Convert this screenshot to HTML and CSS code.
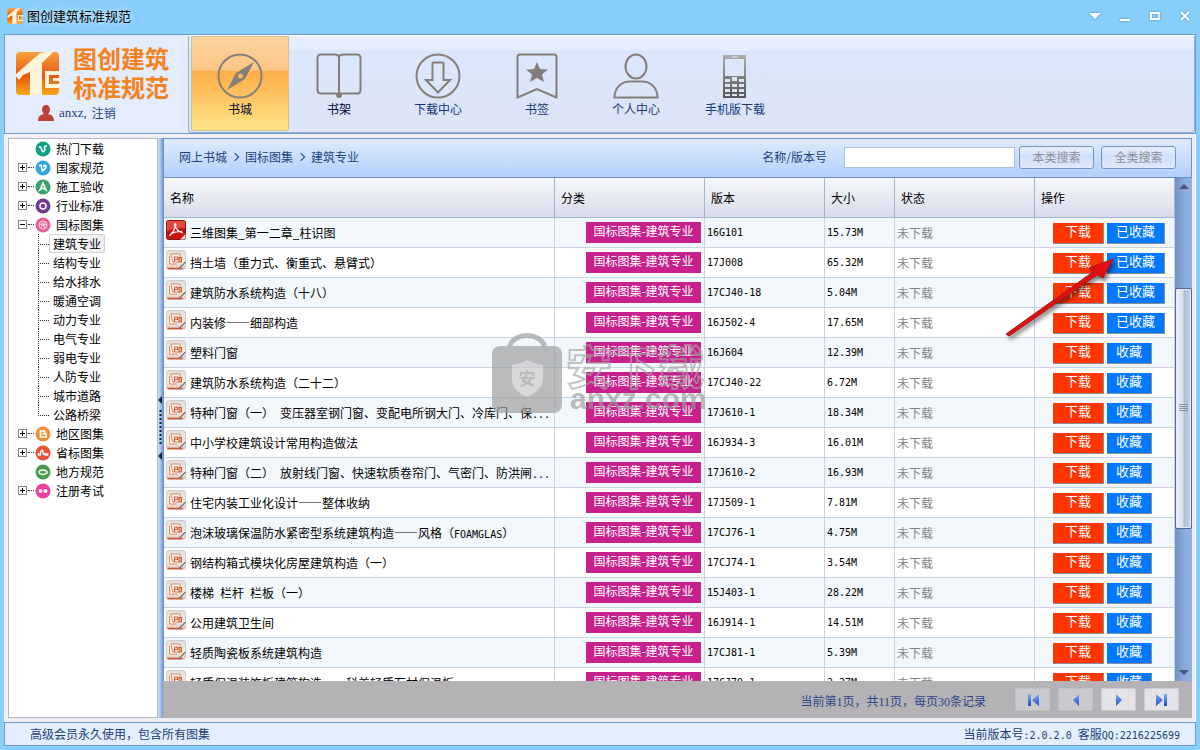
FILE: index.html
```html
<!DOCTYPE html>
<html lang="zh-CN">
<head>
    <meta charset="UTF-8">
    <meta name="viewport" content="width=device-width, initial-scale=1.0">
    <title>图创建筑标准规范</title>
    <link rel="stylesheet" href="styles.css">
</head>
<body>
<svg class="defs" aria-hidden="true">
    <defs>
        <linearGradient id="orange" x1="0" y1="0" x2="0" y2="1">
            <stop offset="0" stop-color="#f9a23c"/><stop offset="0.55" stop-color="#e8560f"/><stop offset="1" stop-color="#f9a81c"/>
        </linearGradient>
        <linearGradient id="paper" x1="0" y1="0" x2="0" y2="1">
            <stop offset="0" stop-color="#dcdcdf"/><stop offset="0.6" stop-color="#f6f1ef"/><stop offset="1" stop-color="#dfc0b4"/>
        </linearGradient>
        <linearGradient id="phone" x1="0" y1="0" x2="0" y2="1">
            <stop offset="0" stop-color="#b0b0b0"/><stop offset="1" stop-color="#555"/>
        </linearGradient>
        <linearGradient id="nav" x1="0" y1="0" x2="0" y2="1">
            <stop offset="0" stop-color="#7db0f8"/><stop offset="1" stop-color="#1f4fc0"/>
        </linearGradient>
        <symbol id="logo" viewBox="0 0 45 45">
            <rect x="1" y="1" width="43" height="43" rx="4" fill="url(#orange)"/>
            <path d="M0 24 25 2 39 0 27 12V44H15V21L8 24 4 29Z" fill="#fff4dc"/>
            <path d="M45 20H30V37H45V33H34V24H45Z" fill="#fff4dc"/>
            <path d="M45 27H38V30H45Z" fill="#fff4dc"/>
        </symbol>
        <symbol id="pdf" viewBox="0 0 20 20">
            <rect x="0.5" y="0.5" width="19" height="19" rx="2" fill="#c8130d" stroke="#8e1612"/>
            <path d="M1 2q0-1 1-1h16q1 0 1 1v6Q10 7 1 11Z" fill="#e4493f"/>
            <path d="M9 3.500c2 0 .5 6-5.500 12.500M9 3.500c-1.500 0 1 8 8 9.500M4.500 14Q10 10.500 16 11.500" fill="none" stroke="#fff" stroke-width="1.200"/>
            <path d="M14 19.500 19.500 14V18L18 19.500Z" fill="#ddd"/>
        </symbol>
        <symbol id="doc" viewBox="0 0 20 20">
            <rect x="0.500" y="0.500" width="19" height="19" rx="2.500" fill="url(#paper)" stroke="#d3ccca"/>
            <path d="M1.500 18.500h15" stroke="#d2572b" stroke-width="1.500"/>
            <path d="M5 4h9v8H6.500ZM3.500 6v8H11" fill="#fdf6f2" stroke="#e08a62"/>
            <path d="M8.500 12V7h3v2.500h-3M13 7.500h2.500v4.500H13Z" fill="none" stroke="#d4602f" stroke-width="1.200"/>
            <path d="M13 18.500 19.500 12" stroke="#777" stroke-width="1.200"/>
        </symbol>
        <symbol id="first" viewBox="0 0 14 14"><path d="M2 1h3v12H2ZM13 1v12L6 7Z" fill="url(#nav)"/></symbol>
        <symbol id="prev" viewBox="0 0 14 14"><path d="M10 1v12L4 7Z" fill="url(#nav)"/></symbol>
        <symbol id="next" viewBox="0 0 14 14"><path d="M4 1v12l6-6Z" fill="url(#nav)"/></symbol>
        <symbol id="last" viewBox="0 0 14 14"><path d="M1 1v12l7-6ZM9 1h3v12H9Z" fill="url(#nav)"/></symbol>
    </defs>
</svg>

<header class="title-bar">
    <svg class="app-icon"><use href="#logo"/></svg>
    <h1 class="app-title">图创建筑标准规范</h1>
    <div class="window-buttons">
        <button type="button" aria-label="菜单"><svg viewBox="0 0 12 12"><path d="M0 3h12L6 9Z" fill="#fff"/></svg></button>
        <button type="button" aria-label="最小化"><svg viewBox="0 0 12 12"><path d="M1 9h10v2H1Z" fill="#fff"/></svg></button>
        <button type="button" aria-label="最大化"><svg viewBox="0 0 12 12"><path d="M2 3h8v6H2Z" fill="none" stroke="#fff" stroke-width="2"/></svg></button>
        <button type="button" aria-label="关闭"><svg viewBox="0 0 12 12"><path d="m2 2 8 8M10 2l-8 8" stroke="#fff" stroke-width="2"/></svg></button>
    </div>
</header>

<div class="ribbon">
    <div class="brand">
        <div class="brand-top">
            <svg class="brand-logo"><use href="#logo"/></svg>
            <div class="brand-name">图创建筑<br>标准规范</div>
        </div>
        <div class="user">
            <svg class="user-icon" viewBox="0 0 16 16"><path d="M8 0c2.500 0 4 1.800 4 4.500 0 2-1 3.500-2 4.500 3.500.8 6 2 6 7H0c0-5 2.500-6.200 6-7-1-1-2-2.500-2-4.500C4 1.800 5.500 0 8 0Z" fill="#c0403c"/></svg>
            <span>anxz,</span><a href="#">注销</a>
        </div>
    </div>
    <nav class="menu">
        <button type="button" class="menu-item active">
            <svg viewBox="0 0 46 46"><circle cx="23" cy="23" r="21.500"/><path class="solid" fill-rule="evenodd" d="M37 9 28 26 10 37 19 20ZM23.500 20.500a2.500 2.500 0 1 0 .01 0Z"/></svg>
            书城
        </button>
        <button type="button" class="menu-item dark">
            <svg viewBox="0 0 46 46"><path d="M23 4Q22 1.500 19 1.500H5Q1.500 1.500 1.500 5V37Q1.500 40.500 5 40.500H19Q22 40.500 23 42Q24 40.500 27 40.500H41Q44.500 40.500 44.500 37V5Q44.500 1.500 41 1.500H27Q24 1.500 23 4V40"/><circle class="solid" cx="23" cy="42" r="3"/></svg>
            书架
        </button>
        <button type="button" class="menu-item">
            <svg viewBox="0 0 46 46"><circle cx="23" cy="23" r="21.500"/><path d="M17.500 10.500q0-1 1-1h9q1 0 1 1V27H35L23 39.500 11 27h6.500Z"/></svg>
            下载中心
        </button>
        <button type="button" class="menu-item">
            <svg viewBox="0 0 46 46"><path d="M3.500 4q0-2.500 2.500-2.500H40q2.500 0 2.500 2.500V44.500L23 36 3.500 44.500Z"/><path class="solid" d="m23 9 3 7 8 .5-6 5 2 7.500-7-4-7 4 2-7.500-6-5 8-.5Z"/></svg>
            书签
        </button>
        <button type="button" class="menu-item">
            <svg viewBox="0 0 46 46"><ellipse cx="23" cy="13.500" rx="10.500" ry="12"/><path d="M1.500 44.500C1.500 33 10 28.500 17 28.500H29C36 28.500 44.500 33 44.500 44.500Z"/></svg>
            个人中心
        </button>
        <button type="button" class="menu-item">
            <svg viewBox="0 0 46 46"><path class="phone" fill-rule="evenodd" d="M11 2h23v43H11ZM13 6v17h19V6ZM13 26v3h5v-3ZM20 24v4h5v-4ZM27 26v3h5v-3ZM13 31v3h5v-3ZM20 31v3h5v-3ZM27 31v3h5v-3ZM13 36v3h5v-3ZM20 36v3h5v-3ZM27 36v3h5v-3ZM13 41v2h5v-2ZM20 41v2h5v-2ZM27 41v2h5v-2ZM20 3.500v1h6v-1Z"/></svg>
            手机版下载
        </button>
    </nav>
</div>

<main class="main">
    <aside class="tree">
        <ul>
            <li class="node"><i class="box none"></i><svg viewBox="0 0 16 16"><circle cx="8" cy="8" r="7.500" fill="#12a086"/><path d="M4 6q2-1 3 4 2 2 3-2-2-3 2-3" /></svg><span>热门下载</span></li>
            <li class="node"><i class="box"></i><svg viewBox="0 0 16 16"><circle cx="8" cy="8" r="7.500" fill="#2fa9dc"/><path d="m4 6 2-1 1.500 6Q11 9 11 6 9 4 8.500 7"/></svg><span>国家规范</span></li>
            <li class="node"><i class="box"></i><svg viewBox="0 0 16 16"><circle cx="8" cy="8" r="7.500" fill="#35a26c"/><path d="M5 11 8 4l3 7-3-2Z"/></svg><span>施工验收</span></li>
            <li class="node"><i class="box"></i><svg viewBox="0 0 16 16"><circle cx="8" cy="8" r="7.500" fill="#733a96"/><circle cx="8" cy="8" r="3"/></svg><span>行业标准</span></li>
            <li class="node"><i class="box open"></i><svg viewBox="0 0 16 16"><circle cx="8" cy="8" r="7.500" fill="#ea5f96"/><g class="thin"><circle cx="8" cy="8" r="4"/><path d="M4 7q4 2 7-2M6 11q1-4 6-3M6 4.500q3 2 4 7"/></g></svg><span>国标图集</span>
                <ul class="children">
                    <li><a class="selected" href="#">建筑专业</a></li>
                    <li><a href="#">结构专业</a></li>
                    <li><a href="#">给水排水</a></li>
                    <li><a href="#">暖通空调</a></li>
                    <li><a href="#">动力专业</a></li>
                    <li><a href="#">电气专业</a></li>
                    <li><a href="#">弱电专业</a></li>
                    <li><a href="#">人防专业</a></li>
                    <li><a href="#">城市道路</a></li>
                    <li><a href="#">公路桥梁</a></li>
                </ul>
            </li>
            <li class="node"><i class="box"></i><svg viewBox="0 0 16 16"><circle cx="8" cy="8" r="7.500" fill="#f0903a"/><path d="M5.500 5h4v2.500h1.500V11H5.500ZM7 8h2"/></svg><span>地区图集</span></li>
            <li class="node"><i class="box"></i><svg viewBox="0 0 16 16"><circle cx="8" cy="8" r="7.500" fill="#ea5333"/><path d="M3.500 8v2h2V7Q8 3 8 8q1 3 2.500 0v2h2V8"/></svg><span>省标图集</span></li>
            <li class="node"><i class="box none"></i><svg viewBox="0 0 16 16"><circle cx="8" cy="8" r="7.500" fill="#4c9c4f"/><path d="M4 9q0-3 4-3t4 3q-4 3-8 0"/></svg><span>地方规范</span></li>
            <li class="node"><i class="box"></i><svg viewBox="0 0 16 16"><circle cx="8" cy="8" r="7.500" fill="#ec3fa0"/><circle class="dot" cx="5.500" cy="8" r="2"/><circle class="dot" cx="10.500" cy="8" r="2"/></svg><span>注册考试</span></li>
        </ul>
    </aside>

    <div class="splitter" aria-hidden="true">
        <svg viewBox="0 0 5 64"><path d="M4 0v8L0 4ZM4 56v8l-4-4Z" fill="#123"/><path d="M2.500 14v36" stroke="#123" stroke-width="2" stroke-dasharray="2 2"/></svg>
    </div>

    <section class="content">
        <form class="toolbar">
            <nav class="crumbs"><a href="#">网上书城</a><i></i><a href="#">国标图集</a><i></i><a href="#">建筑专业</a></nav>
            <label for="keyword">名称/版本号</label>
            <input id="keyword" type="text">
            <button type="button">本类搜索</button>
            <button type="button">全类搜索</button>
        </form>

        <div class="list">
            <div class="table-wrap">
                <table>
                    <colgroup><col><col class="w-type"><col class="w-version"><col class="w-size"><col class="w-state"><col class="w-action"></colgroup>
                    <thead>
                        <tr><th>名称</th><th>分类</th><th>版本</th><th>大小</th><th>状态</th><th>操作</th></tr>
                    </thead>
                    <tbody>
                        <tr>
                            <td class="name"><svg><use href="#pdf"/></svg>三维图集_第一二章_柱识图</td><td class="type"><span>国标图集-建筑专业</span></td>
                            <td class="mono">16G101</td><td class="mono">15.73M</td><td class="state">未下载</td>
                            <td class="action"><button type="button" class="down">下载</button><button type="button" class="fav">已收藏</button></td>
                        </tr>
                        <tr>
                            <td class="name"><svg><use href="#doc"/></svg>挡土墙（重力式、衡重式、悬臂式）</td><td class="type"><span>国标图集-建筑专业</span></td>
                            <td class="mono">17J008</td><td class="mono">65.32M</td><td class="state">未下载</td>
                            <td class="action"><button type="button" class="down">下载</button><button type="button" class="fav">已收藏</button></td>
                        </tr>
                        <tr>
                            <td class="name"><svg><use href="#doc"/></svg>建筑防水系统构造（十八）</td><td class="type"><span>国标图集-建筑专业</span></td>
                            <td class="mono">17CJ40-18</td><td class="mono">5.04M</td><td class="state">未下载</td>
                            <td class="action"><button type="button" class="down">下载</button><button type="button" class="fav">已收藏</button></td>
                        </tr>
                        <tr>
                            <td class="name"><svg><use href="#doc"/></svg>内装修——细部构造</td><td class="type"><span>国标图集-建筑专业</span></td>
                            <td class="mono">16J502-4</td><td class="mono">17.65M</td><td class="state">未下载</td>
                            <td class="action"><button type="button" class="down">下载</button><button type="button" class="fav">已收藏</button></td>
                        </tr>
                        <tr>
                            <td class="name"><svg><use href="#doc"/></svg>塑料门窗</td><td class="type"><span>国标图集-建筑专业</span></td>
                            <td class="mono">16J604</td><td class="mono">12.39M</td><td class="state">未下载</td>
                            <td class="action"><button type="button" class="down">下载</button><button type="button" class="fav">收藏</button></td>
                        </tr>
                        <tr>
                            <td class="name"><svg><use href="#doc"/></svg>建筑防水系统构造（二十二）</td><td class="type"><span>国标图集-建筑专业</span></td>
                            <td class="mono">17CJ40-22</td><td class="mono">6.72M</td><td class="state">未下载</td>
                            <td class="action"><button type="button" class="down">下载</button><button type="button" class="fav">收藏</button></td>
                        </tr>
                        <tr>
                            <td class="name"><svg><use href="#doc"/></svg>特种门窗（一）&ensp;变压器室钢门窗、变配电所钢大门、冷库门、保<span class="mono">...</span></td><td class="type"><span>国标图集-建筑专业</span></td>
                            <td class="mono">17J610-1</td><td class="mono">18.34M</td><td class="state">未下载</td>
                            <td class="action"><button type="button" class="down">下载</button><button type="button" class="fav">收藏</button></td>
                        </tr>
                        <tr>
                            <td class="name"><svg><use href="#doc"/></svg>中小学校建筑设计常用构造做法</td><td class="type"><span>国标图集-建筑专业</span></td>
                            <td class="mono">16J934-3</td><td class="mono">16.01M</td><td class="state">未下载</td>
                            <td class="action"><button type="button" class="down">下载</button><button type="button" class="fav">收藏</button></td>
                        </tr>
                        <tr>
                            <td class="name"><svg><use href="#doc"/></svg>特种门窗（二）&ensp;放射线门窗、快速软质卷帘门、气密门、防洪闸<span class="mono">...</span></td><td class="type"><span>国标图集-建筑专业</span></td>
                            <td class="mono">17J610-2</td><td class="mono">16.93M</td><td class="state">未下载</td>
                            <td class="action"><button type="button" class="down">下载</button><button type="button" class="fav">收藏</button></td>
                        </tr>
                        <tr>
                            <td class="name"><svg><use href="#doc"/></svg>住宅内装工业化设计——整体收纳</td><td class="type"><span>国标图集-建筑专业</span></td>
                            <td class="mono">17J509-1</td><td class="mono">7.81M</td><td class="state">未下载</td>
                            <td class="action"><button type="button" class="down">下载</button><button type="button" class="fav">收藏</button></td>
                        </tr>
                        <tr>
                            <td class="name"><svg><use href="#doc"/></svg>泡沫玻璃保温防水紧密型系统建筑构造——风格（<span class="mono">FOAMGLAS</span>）</td><td class="type"><span>国标图集-建筑专业</span></td>
                            <td class="mono">17CJ76-1</td><td class="mono">4.75M</td><td class="state">未下载</td>
                            <td class="action"><button type="button" class="down">下载</button><button type="button" class="fav">收藏</button></td>
                        </tr>
                        <tr>
                            <td class="name"><svg><use href="#doc"/></svg>钢结构箱式模块化房屋建筑构造（一）</td><td class="type"><span>国标图集-建筑专业</span></td>
                            <td class="mono">17CJ74-1</td><td class="mono">3.54M</td><td class="state">未下载</td>
                            <td class="action"><button type="button" class="down">下载</button><button type="button" class="fav">收藏</button></td>
                        </tr>
                        <tr>
                            <td class="name"><svg><use href="#doc"/></svg>楼梯&ensp;栏杆&ensp;栏板（一）</td><td class="type"><span>国标图集-建筑专业</span></td>
                            <td class="mono">15J403-1</td><td class="mono">28.22M</td><td class="state">未下载</td>
                            <td class="action"><button type="button" class="down">下载</button><button type="button" class="fav">收藏</button></td>
                        </tr>
                        <tr>
                            <td class="name"><svg><use href="#doc"/></svg>公用建筑卫生间</td><td class="type"><span>国标图集-建筑专业</span></td>
                            <td class="mono">16J914-1</td><td class="mono">14.51M</td><td class="state">未下载</td>
                            <td class="action"><button type="button" class="down">下载</button><button type="button" class="fav">收藏</button></td>
                        </tr>
                        <tr>
                            <td class="name"><svg><use href="#doc"/></svg>轻质陶瓷板系统建筑构造</td><td class="type"><span>国标图集-建筑专业</span></td>
                            <td class="mono">17CJ81-1</td><td class="mono">5.39M</td><td class="state">未下载</td>
                            <td class="action"><button type="button" class="down">下载</button><button type="button" class="fav">收藏</button></td>
                        </tr>
                        <tr>
                            <td class="name"><svg><use href="#doc"/></svg>轻质保温装饰板建筑构造——科美轻质石材保温板</td><td class="type"><span>国标图集-建筑专业</span></td>
                            <td class="mono">17CJ79-1</td><td class="mono">2.27M</td><td class="state">未下载</td>
                            <td class="action"><button type="button" class="down">下载</button><button type="button" class="fav">收藏</button></td>
                        </tr>
                    </tbody>
                </table>
            </div>
            <div class="scrollbar" aria-hidden="true">
                <svg class="arrow" viewBox="0 0 10 5"><path d="M0 5h10L5 0Z" fill="#47587c"/></svg>
                <div class="track"><div class="thumb"><i></i></div></div>
                <svg class="arrow" viewBox="0 0 10 5"><path d="M0 0h10L5 5Z" fill="#47587c"/></svg>
            </div>
        </div>

        <footer class="pager">
            <span>当前第1页，共11页，每页30条记录</span>
            <button type="button" aria-label="首页" disabled><svg><use href="#first"/></svg></button>
            <button type="button" aria-label="上一页" disabled><svg><use href="#prev"/></svg></button>
            <button type="button" aria-label="下一页"><svg><use href="#next"/></svg></button>
            <button type="button" aria-label="末页"><svg><use href="#last"/></svg></button>
        </footer>

        <!-- watermark and pointer arrow lie over the list -->
        <div class="watermark">
            <svg viewBox="0 0 70 80">
                <path d="M17 16C19-2 51-2 53 16" fill="none" stroke="#999" stroke-width="5"/>
                <rect x="0" y="13" width="70" height="67" rx="8" fill="#999"/>
                <path d="M20 32Q29 31 35 27Q42 31 51 32V48Q49 58 35 64Q21 58 20 48Z" fill="#c4c4c4"/>
                <text x="35" y="52" text-anchor="middle">安</text>
            </svg>
            <div class="mark-text"><b>安下载</b><span>anxz.com</span></div>
        </div>
        <svg class="pointer" viewBox="0 0 112 84" aria-hidden="true">
            <path d="M2 79 89 17 85 13 109 4 99 23 93 20 5 81Z" fill="#e01010" stroke="#a81818"/>
        </svg>
    </section>
</main>

<footer class="status-bar">
    <span>高级会员永久使用，包含所有图集</span>
    <span>当前版本号<span class="mono">:2.0.2.0&nbsp;</span>客服<span class="mono">QQ:2216225699</span></span>
</footer>
</body>
</html>
```
FILE: styles.css
```css
* { box-sizing: border-box; }

body {
    margin: 0;
    height: 100vh;
    padding: 0 4px 4px;
    display: flex;
    flex-direction: column;
    background: #87cefa;
    font: 12px/18px "Noto Sans CJK SC", sans-serif;
    color: #000;
    overflow: hidden;
}

button, input { font: inherit; margin: 0; padding: 0; border: 0; }
a { color: inherit; text-decoration: none; }
ul { list-style: none; margin: 0; padding: 0; }
svg { display: block; flex: none; }
.defs { position: absolute; width: 0; height: 0; }
.mono { font-family: "DejaVu Sans Mono", "Noto Sans CJK SC", monospace; font-size: 10px; }
span.mono { line-height: 1; }

/* Title bar */
.title-bar { flex: none; display: flex; align-items: center; height: 34px; padding: 0 5px 3px 3px; }
.app-icon { width: 16px; height: 16px; margin-right: 4px; }
.app-title { margin: 0; font-size: 13px; font-weight: 400; text-shadow: 0 0 6px #fff; }
.window-buttons { display: flex; gap: 18px; margin-left: auto; }
.window-buttons button { width: 12px; height: 12px; background: none; filter: drop-shadow(0 0 1px #4a88b8); }

/* Ribbon */
.ribbon { flex: none; display: flex; height: 100px; border: 1px solid #6f98c8; background: #e4edfc; }
.brand { width: 183px; padding: 8px 0 0 10px; }
.brand-top { display: flex; align-items: center; gap: 13px; height: 60px; }
.brand-logo { width: 45px; height: 45px; }
.brand-name { padding-bottom: 3px; color: #f58220; font-size: 24px; line-height: 29px; font-weight: 700; }
.user { display: flex; align-items: center; gap: 5px; height: 20px; padding-left: 23px; color: #23457f; }
.user span { font: 13px "Liberation Serif", serif; }
.user-icon { width: 16px; height: 16px; }
.menu {
    flex: 1;
    display: flex;
    gap: 1px;
    padding: 0 2px 1px;
    border: 1px solid #8db2de;
    border-top-color: #fff;
    border-radius: 3px;
    background: linear-gradient(#e6effd 0, #e4edfb 14px, #dae7fa 14px, #dce4f6 100%);
}
.menu-item {
    display: flex;
    flex-direction: column;
    align-items: center;
    width: 98px;
    padding-top: 17px;
    background: none;
    color: #16387a;
    border-radius: 2px;
}
.menu-item svg { width: 46px; height: 46px; margin-bottom: 1px; fill: none; stroke: #857f7b; stroke-width: 2; }
.menu-item .solid { fill: #857f7b; stroke: none; }
.menu-item .phone { fill: url(#phone); stroke: none; }
.menu-item.dark { color: #000032; }
.menu-item.active {
    color: #000032;
    box-shadow: inset 0 0 0 1px #d5bd8c;
    background: linear-gradient(#fbd3a0 0, #fcc687 36%, #fdae49 37%, #fdc05c 60%, #fee789 100%);
}

/* Main area */
.main { flex: 1; min-height: 0; display: flex; padding: 4px 3px 4px 4px; background: #eff0f6; border-right: 1px solid #fff; }
.tree { flex: none; width: 150px; border: 1px solid #b4b8c6; background: #fff; overflow: hidden; }
.node { position: relative; display: flex; flex-wrap: wrap; align-items: center; padding-left: 9px; line-height: 19px; }
.node > svg { width: 16px; height: 16px; margin: 0 5px 0 8px; fill: none; stroke: #fff; stroke-width: 1.5; }
.node > svg > circle:first-child { stroke: none; }
.node .thin { stroke-width: 0.7; }
.node .dot { fill: #fff; stroke: none; }
.box {
    width: 9px;
    height: 9px;
    border: 1px solid #848484;
    background: linear-gradient(#000, #000) center / 5px 1px no-repeat, linear-gradient(#000, #000) center / 1px 5px no-repeat, #fff;
    position: relative;
}
.box::after { content: ""; position: absolute; left: 9px; top: 3px; width: 6px; border-top: 1px dotted #333; }
.box.open { background: linear-gradient(#000, #000) center / 5px 1px no-repeat, #fff; }
.box.none { visibility: hidden; }
.children { flex: 0 0 100%; padding-left: 20px; }
.children li { position: relative; height: 19px; padding-left: 11px; }
.children li::before { content: ""; position: absolute; left: 0; top: 0; width: 10px; height: 10px; border: 1px dotted #333; border-width: 0 0 1px 1px; }
.children li:not(:last-child)::after { content: ""; position: absolute; left: 0; top: 10px; height: 9px; border-left: 1px dotted #333; }
.children a { display: inline-block; height: 19px; padding: 0 4px; line-height: 19px; }
.children .selected { box-shadow: inset 0 0 0 1px #d5d3d7; border-radius: 2px; background: linear-gradient(90deg, #fff, #ececf0); }

.splitter { flex: none; display: flex; align-items: center; width: 5px; background: linear-gradient(90deg, #d3e0f6, #94b4ea 70%, #6e94d4); }
.splitter svg { width: 5px; height: 64px; }

.content { position: relative; flex: 1; min-width: 0; display: flex; flex-direction: column; }
.toolbar {
    flex: none;
    display: flex;
    align-items: center;
    height: 40px;
    padding: 0 15px 2px;
    border: 1px solid #6f93cb;
    background: linear-gradient(#deeafd, #cadefb 50%, #b2d0fc);
    color: #1c4380;
}
.crumbs { display: flex; align-items: center; flex: 1; }
.crumbs i { width: 6px; height: 6px; margin: 0 7px 0 5px; border: 1px solid #1c4380; border-width: 1px 1px 0 0; transform: rotate(45deg); }
.toolbar input { width: 171px; height: 21px; margin: 0 4px 0 17px; border: 1px solid #abc1de; background: #fff; }
.toolbar button {
    width: 75px;
    height: 23px;
    border: 1px solid #7793c0;
    border-radius: 3px;
    background: linear-gradient(#e3edfc 0, #dae6fa 35%, #cddff8 36%, #dfe9fa 100%);
    color: #8d9099;
}
.toolbar button + button { margin-left: 7px; }

/* Book list */
.list { flex: 1; min-height: 0; display: flex; border-left: 1px solid #6f93cb; }
.table-wrap { flex: 1; min-width: 0; overflow: hidden; background: #fff; }
table { width: 100%; table-layout: fixed; border-collapse: separate; border-spacing: 0; }
.w-type { width: 150px; }
.w-version { width: 120px; }
.w-size { width: 70px; }
.w-state, .w-action { width: 140px; }
th {
    height: 40px;
    padding: 0 6px;
    text-align: left;
    font-weight: 400;
    border-right: 1px solid #a3b6d2;
    border-bottom: 1px solid #a3b6d2;
    background: linear-gradient(#f7f8fc, #e8eaf3 50%, #d8dbea);
}
td { height: 30px; padding: 0 2px; border-right: 1px solid #c7d3e4; border-bottom: 1px solid #c7d3e4; white-space: nowrap; }
tbody tr:nth-child(odd) { background: #f2f7fb; }
.name { height: 30px; padding: 2px 2px 0; line-height: 25px; vertical-align: top; overflow: hidden; }
.name svg { float: left; width: 20px; height: 20px; margin-right: 4px; }
.type { padding-right: 3px; text-align: right; }
.type span { display: inline-block; width: 115px; height: 21px; line-height: 18px; text-align: center; background: #c8208c; color: #fff; vertical-align: middle; }
.state { color: #848484; }
.action { padding: 2px 0 0 18px; }
.action button {
    height: 21px;
    padding-bottom: 5px;
    line-height: 15px;
    font-size: 13px;
    color: #fff;
    border: 0 solid #8b8e98;
    border-width: 0 1px 1px 0;
    vertical-align: middle;
}
.action .down { width: 51px; margin-right: 3px; background: #ff3500; }
.action .fav { padding: 0 9px 5px; background: #0078ff; }

.scrollbar {
    flex: none;
    display: flex;
    flex-direction: column;
    align-items: center;
    width: 17px;
    padding: 6px 0;
    background: linear-gradient(90deg, #7391c2, #8caadb 60%, #93b1e0);
}
.arrow { width: 10px; height: 5px; }
.track { flex: 1; align-self: stretch; padding-top: 99px; }
.thumb {
    display: flex;
    align-items: center;
    justify-content: center;
    height: 63%;
    border: 1px solid #56689a;
    border-radius: 2px;
    background: linear-gradient(90deg, #eff0f8, #d8deec 45%, #aebfda 55%, #c5d2e8);
    box-shadow: inset 0 0 0 1px #e6edfa;
}
.thumb i { width: 9px; height: 8px; background: repeating-linear-gradient(#8b93a6 0 1px, transparent 1px 2px); }

.pager { flex: none; display: flex; align-items: center; justify-content: flex-end; gap: 8px; height: 37px; padding-right: 13px; background: #b4b2b5; }
.pager span { margin-right: 21px; padding-top: 5px; font-family: "Liberation Serif", "Noto Sans CJK SC", serif; color: #2a4788; }
.pager button { display: flex; align-items: center; justify-content: center; width: 35px; height: 23px; background: #e3e2e6; border: 1px solid #cccbd0; }
.pager button:disabled { background: #cac9ce; border-color: #c2c0c5; }
.pager svg { width: 14px; height: 14px; }

/* Overlays */
.watermark { position: absolute; left: 329px; top: 195px; display: flex; gap: 4px; opacity: 0.65; pointer-events: none; }
.watermark svg { width: 70px; height: 80px; }
.watermark text { font-size: 17px; font-weight: 700; fill: #999; }
.mark-text { padding-top: 8px; white-space: nowrap; }
.mark-text b { display: block; font-size: 46px; line-height: 46px; color: transparent; -webkit-text-stroke: 2px #a4a4a4; }
.mark-text span { display: block; padding-left: 4px; font: 700 30px/24px "Liberation Sans", sans-serif; color: #999; }
.pointer { position: absolute; right: 76px; top: 117px; width: 112px; height: 84px; filter: drop-shadow(2px 3px 2px rgba(0, 0, 0, 0.5)); }

/* Status bar */
.status-bar {
    flex: none;
    display: flex;
    align-items: center;
    justify-content: space-between;
    height: 24px;
    padding: 0 15px 0 25px;
    border: 1px solid #6f98c8;
    background: #e3eefe;
    color: #1c3f74;
}
```
